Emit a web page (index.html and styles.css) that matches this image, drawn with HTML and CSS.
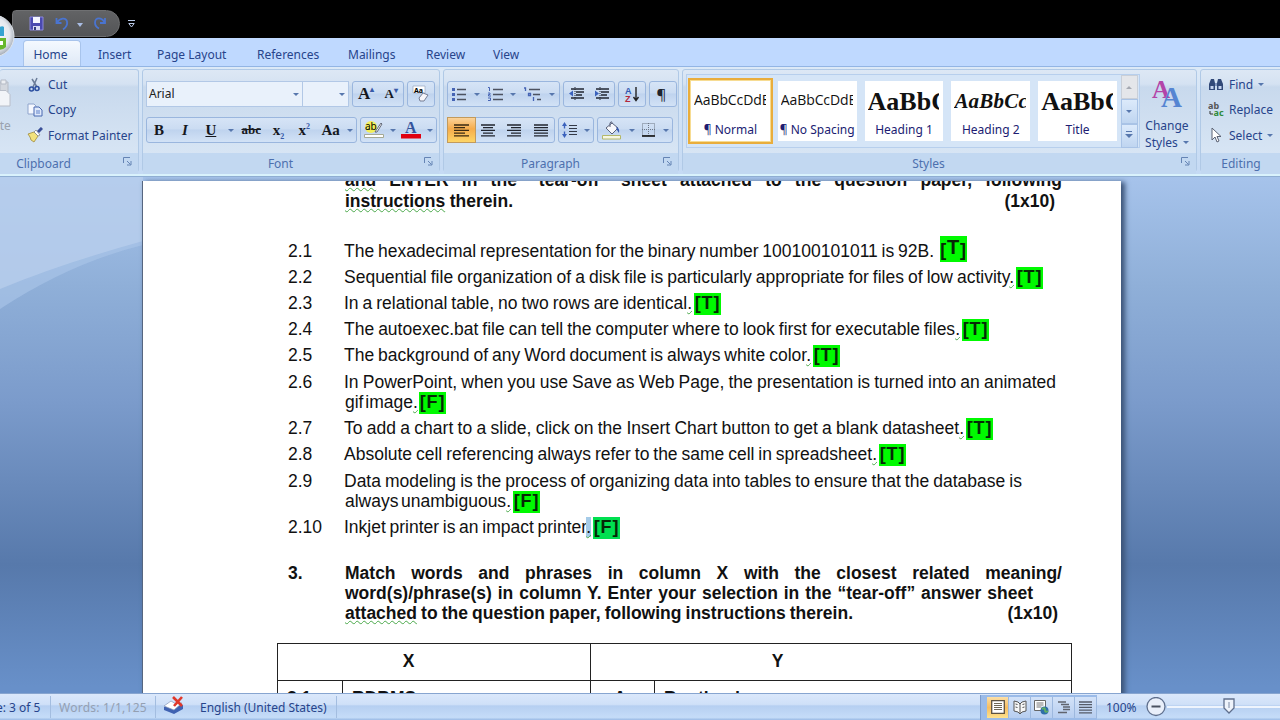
FILE: index.html
```
<!DOCTYPE html>
<html lang="en">
<head>
    <meta charset="UTF-8">
    <title>Word</title>
    <link rel="stylesheet" href="styles.css">
</head>
<body>
    <div class="titlebar">
        <div class="quick">
            <svg width="15" height="15" viewBox="0 0 15 15"><path d="M1 1h13v13H1z" fill="#4a49b0" stroke="#8a88dc"/><path d="M4 1h7v6H4z" fill="#f4f5ff"/><path d="M4 10h7v4H4z" fill="#d8daf4"/><path d="M5 11h2v3H5z" fill="#333a7a"/></svg>
            <svg class="undo" width="14" height="14" viewBox="0 0 14 14"><path d="M1.500 1v5h5M2 5.500C5 1 11 0 12 4.500c.6 3-1 6-4 8" fill="none" stroke="#4a74d0" stroke-width="1.800"/></svg>
            <svg class="undo-arrow" width="6" height="4" viewBox="0 0 6 4"><path d="M0 0h6L3 4z" fill="#a9bde4"/></svg>
            <svg class="redo" width="14" height="14" viewBox="0 0 14 14"><path d="M12 1v5H7M11.500 5.500C9 0 2 0 2 5.500c0 3 2 5 4 6" fill="none" stroke="#4a74d0" stroke-width="1.800"/></svg>
        </div>
        <svg class="more" width="7" height="8" viewBox="0 0 7 8"><path d="M0 .5h7" stroke="#b9c9e8"/><path d="M.8 3.500h5.400L3.500 7z" fill="none" stroke="#b9c9e8"/></svg>
        <svg class="orb" width="15" height="46" viewBox="0 0 15 46"><defs><radialGradient id="orb" cx="-7" cy="20" r="22" gradientUnits="userSpaceOnUse"><stop offset="0" stop-color="#fff"/><stop offset=".75" stop-color="#e4e8ee"/><stop offset="1" stop-color="#a9b1bd"/></radialGradient></defs><circle cx="-7" cy="22" r="21" fill="url(#orb)" stroke="#dfe4ea"/><path d="M-2 14q4-3 6-1v9h-6z" fill="#36a3d0"/><path d="M-3 24h9v9q-4 4-9 2z" fill="#67b82c"/><path d="M0 27h3v4H0z" fill="#fff"/></svg>
    </div>

    <div class="tabs">
        <span class="tab active">Home</span>
        <span class="tab insert">Insert</span>
        <span class="tab layout">Page Layout</span>
        <span class="tab refs">References</span>
        <span class="tab mail">Mailings</span>
        <span class="tab review">Review</span>
        <span class="tab">View</span>
    </div>

    <div class="ribbon">
        <div class="group clipboard">
            <div class="group-body">
                <div class="paste">
                    <svg width="12" height="30" viewBox="0 0 12 30"><path d="M0 3h8v10H0z" fill="#d3d7de" stroke="#b5bbc6"/><path d="M1 1h5v4H1z" fill="#eceef2" stroke="#b5bbc6"/><path d="M-2 11.500h8l4 4V27H-2z" fill="#f2f4f8" stroke="#b9bec9"/></svg>
                    <span>ste</span>
                </div>
                <div class="commands">
                    <span><svg width="16" height="16" viewBox="0 0 16 16"><path d="M5 2l5 8M10 1L6 10" stroke="#6b7c98" stroke-width="1.500"/><circle cx="4.500" cy="12" r="2" fill="none" stroke="#2c4fa0" stroke-width="1.600"/><circle cx="10" cy="11.500" r="2" fill="none" stroke="#2c4fa0" stroke-width="1.600"/></svg>Cut</span>
                    <span><svg width="16" height="16" viewBox="0 0 16 16"><path d="M1 2h6l2 2v8H1z" fill="#f5f8ff" stroke="#8fa4cc"/><path d="M7 5h5l3 3v6H7z" fill="#dfe9fb" stroke="#4968b0"/><path d="M9 9h4M9 11h4" stroke="#5e80c8"/></svg>Copy</span>
                    <span><svg width="16" height="16" viewBox="0 0 16 16"><path d="M1 7l6-2 4 4-4 6-3-2-1-3z" fill="#f2e27c" stroke="#a08a3c" stroke-width=".8"/><path d="M7 5l4 4 2-1-4-5z" fill="#fff" stroke="#777" stroke-width=".7"/><path d="M11 5l4-4" stroke="#3a4f98" stroke-width="3"/></svg>Format Painter</span>
                </div>
            </div>
            <div class="group-name"><span>Clipboard</span><svg class="launcher" width="9" height="9" viewBox="0 0 9 9"><path d="M.5 6V.5H7M4 4l3.500 3.500M8 4v4H4" fill="none" stroke="#6584b4"/></svg></div>
        </div>

        <div class="group font">
            <div class="group-body rows">
                <div class="row">
                    <div class="combo face">Arial<i class="caret"></i></div>
                    <div class="combo size"><i class="caret"></i></div>
                    <div class="buttons sizes"><b class="serif grow">A<sup>▴</sup></b><b class="serif shrink">A<sup>▾</sup></b></div>
                    <div class="buttons clear"><svg width="18" height="18" viewBox="0 0 18 18"><path d="M1 1h12v7H1z" fill="#fff" stroke="#9aa8c0" stroke-width=".7"/><text x="2" y="7.500" class="tiny">Aa</text><path d="M7 13l4-5 5 2-4 6H8z" fill="#f6f6fa" stroke="#777f96"/></svg></div>
                </div>
                <div class="row">
                    <div class="buttons styles-set">
                        <b class="serif w1">B</b><b class="serif w1"><i>I</i></b><b class="serif w1"><u>U</u></b><i class="caret"></i><b class="serif strike">abc</b><b class="serif w2">x<sub>2</sub></b><b class="serif w2">x<sup>2</sup></b><b class="serif w3">Aa</b><i class="caret"></i>
                    </div>
                    <div class="buttons colors">
                        <svg width="20" height="20" viewBox="0 0 20 20"><circle cx="7" cy="7" r="6" fill="#f3ef5a"/><text x="1" y="10" class="ab">ab</text><path d="M11 12l6-9 1 1-5 8z" fill="#fff" stroke="#555a6a" stroke-width=".9"/><path d="M.5 14.500h19v3H.5z" fill="#fff" stroke="#a5a995"/></svg><i class="caret"></i>
                        <svg width="20" height="20" viewBox="0 0 20 20"><text x="4" y="12.500" class="big-a">A</text><path d="M0 14h20v4.500H0z" fill="#e0000f"/></svg><i class="caret"></i>
                    </div>
                </div>
            </div>
            <div class="group-name"><span>Font</span><svg class="launcher" width="9" height="9" viewBox="0 0 9 9"><path d="M.5 6V.5H7M4 4l3.500 3.500M8 4v4H4" fill="none" stroke="#6584b4"/></svg></div>
        </div>

        <div class="group paragraph">
            <div class="group-body rows">
                <div class="row">
                    <div class="buttons lists">
                        <svg width="14" height="14" viewBox="0 0 14 14"><path d="M5 2.500h9M5 7.500h9M5 12.500h9" stroke="#4c5260" stroke-width="1.300"/><path d="M0 1h3v3H0zM0 6h3v3H0zM0 11h3v3H0z" fill="#4664b4"/></svg><i class="caret"></i>
                        <svg width="15" height="14" viewBox="0 0 15 14"><path d="M5 2.500h10M5 7.500h10M5 12.500h10" stroke="#4c5260" stroke-width="1.300"/><path d="M0 .5h1.500V4M0 6h2v1.500H.5V9H3M0 11h2.500v2.500H0" stroke="#4664b4" fill="none"/></svg><i class="caret"></i>
                        <svg width="17" height="15" viewBox="0 0 17 15"><path d="M5 2.500h11M9 7.500h7M13 12.500h4" stroke="#4c5260" stroke-width="1.300"/><path d="M0 1h1.500v3M4.500 6.500h2v2h-2zM9.500 10v4" stroke="#4664b4" fill="none" stroke-width="1.300"/></svg><i class="caret"></i>
                    </div>
                    <div class="buttons indents">
                        <svg width="16" height="14" viewBox="0 0 16 14"><path d="M2 2h13M7 5h8M7 8h6M2 11h13" stroke="#222733" stroke-width="1.700"/><path d="M6 0v14" stroke="#222733" stroke-dasharray="1 1"/><path d="M0 6.500l4-3v6z" fill="#3b62bd"/></svg>
                        <svg width="16" height="14" viewBox="0 0 16 14"><path d="M2 2h13M7 5h8M7 8h6M2 11h13" stroke="#222733" stroke-width="1.700"/><path d="M6 0v14" stroke="#222733" stroke-dasharray="1 1"/><path d="M5 6.500l-4-3v6z" fill="#3b62bd"/></svg>
                    </div>
                    <div class="buttons single"><svg width="16" height="18" viewBox="0 0 16 18"><text x="1" y="8.500" class="sort-a">A</text><text x="1" y="17" class="sort-z">Z</text><path d="M12 2v13M9.500 12l2.500 3.500 2.500-3.500" fill="none" stroke="#222" stroke-width="1.400"/></svg></div>
                    <div class="buttons single pilcrow">¶</div>
                </div>
                <div class="row">
                    <div class="buttons align">
                        <span class="on"><svg width="15" height="13" viewBox="0 0 15 13"><path d="M0 1h15M0 3.700h11M0 6.400h15M0 9.100h11M0 11.800h15" stroke="#3a2a12" stroke-width="1.300"/></svg></span>
                        <span><svg width="14" height="13" viewBox="0 0 14 13"><path d="M0 1h14M2 3.700h10M0 6.400h14M2 9.100h10M0 11.800h14" stroke="#20242e" stroke-width="1.300"/></svg></span>
                        <span><svg width="14" height="13" viewBox="0 0 14 13"><path d="M0 1h14M4 3.700h10M0 6.400h14M4 9.100h10M0 11.800h14" stroke="#20242e" stroke-width="1.300"/></svg></span>
                        <span><svg width="14" height="13" viewBox="0 0 14 13"><path d="M0 1h14M0 3.700h14M0 6.400h14M0 9.100h14M0 11.800h14" stroke="#20242e" stroke-width="1.300"/></svg></span>
                    </div>
                    <div class="buttons spacing"><svg width="15" height="16" viewBox="0 0 15 16"><path d="M7 3.500h8M7 6.500h8M7 9.500h8M7 12.500h8" stroke="#333947"/><path d="M2.500 0L5 4H3.200v2.500H1.800V4H0zM2.500 16L5 12H3.200V9.500H1.800V12H0z" fill="#3b62bd"/></svg><i class="caret"></i></div>
                    <div class="buttons shading">
                        <svg width="20" height="19" viewBox="0 0 20 19"><path d="M4 7l6-5 6 5-6 6z" fill="#f7f8fc" stroke="#59617a"/><path d="M8 6V2q2-3 2 1" fill="none" stroke="#59617a"/><path d="M14 6q4 1 3 6l-2-3z" fill="#3558b0"/><path d="M.5 14.500h18v3.500H.5z" fill="#f5f6e4" stroke="#b4b86a"/></svg><i class="caret"></i>
                        <svg width="14" height="14" viewBox="0 0 14 14"><path d="M.5 .5h12v12H.5zM6.500 0v13M0 6.500h13" fill="none" stroke="#6d7685" stroke-dasharray="1 1"/><path d="M0 13h13" stroke="#111" stroke-width="1.600"/></svg><i class="caret"></i>
                    </div>
                </div>
            </div>
            <div class="group-name"><span>Paragraph</span><svg class="launcher" width="9" height="9" viewBox="0 0 9 9"><path d="M.5 6V.5H7M4 4l3.500 3.500M8 4v4H4" fill="none" stroke="#6584b4"/></svg></div>
        </div>

        <div class="group styles">
            <div class="group-body gallery-row">
                <div class="gallery">
                    <div class="style selected"><div class="sample">AaBbCcDdEe</div><div class="name">¶ Normal</div></div>
                    <div class="style"><div class="sample">AaBbCcDdEe</div><div class="name">¶ No Spacing</div></div>
                    <div class="style"><div class="sample heading">AaBbCc</div><div class="name">Heading 1</div></div>
                    <div class="style"><div class="sample heading2">AaBbCcD</div><div class="name">Heading 2</div></div>
                    <div class="style"><div class="sample heading">AaBbCc</div><div class="name">Title</div></div>
                    <div class="scroller"><span class="off"><i class="caret up"></i></span><span><i class="caret"></i></span><span class="last"><i class="caret"></i></span></div>
                </div>
                <div class="change">
                    <svg width="32" height="30" viewBox="0 0 32 30"><text x="1" y="18" class="change-1">A</text><text x="10" y="27" class="change-2">A</text></svg>
                    <span>Change</span>
                    <span>Styles <i class="caret"></i></span>
                </div>
            </div>
            <div class="group-name"><span>Styles</span><svg class="launcher" width="9" height="9" viewBox="0 0 9 9"><path d="M.5 6V.5H7M4 4l3.500 3.500M8 4v4H4" fill="none" stroke="#6584b4"/></svg></div>
        </div>

        <div class="group editing">
            <div class="group-body commands">
                <span><svg width="16" height="14" viewBox="0 0 16 14"><path d="M3 1h3l1 4v7H1V6zM10 1h3l2 5v6H9V5z" fill="#324978"/><path d="M7 5h2v3H7z" fill="#7f93bd"/><path d="M2.500 8h3v3h-3zM10.500 8h3v3h-3z" fill="#c5d4ef"/></svg>Find<i class="caret"></i></span>
                <span><svg width="16" height="16" viewBox="0 0 16 16"><text x="0" y="7" class="rep-a">ab</text><text x="5.500" y="14" class="rep-b">ac</text><path d="M2 9v3h3" fill="none" stroke="#333"/></svg>Replace</span>
                <span><svg width="16" height="16" viewBox="0 0 16 16"><path d="M4 1v12l3-3 2 5 2-1-2-4.500h4z" fill="#fff" stroke="#5b6274"/></svg>Select<i class="caret"></i></span>
            </div>
            <div class="group-name"><span>Editing</span></div>
        </div>
    </div>

    <div class="workspace">
        <svg class="swoosh" width="143" height="517" viewBox="0 0 143 517"><path d="M0 0h143v68Q70 86 0 132z" fill="#abc7e9" opacity=".6"/><path d="M0 0h143v64Q60 87 0 112z" fill="#bed2ef" opacity=".6"/></svg>
        <div class="page">
            <div class="intro">
                <p class="line full"><u>and</u> ENTER in the “tear-off” sheet attached to the question paper, following</p>
                <div class="line ends"><p class="w168"><u>instructions</u> therein.</p><span class="marks first">(1x10)</span></div>
            </div>
            <div class="item"><span class="num">2.1</span><div><div class="line"><p class="w590">The hexadecimal representation for the binary number 100100101011 is 92B.</p><mark class="tall">[<b>T</b>]</mark></div></div></div>
            <div class="item"><span class="num">2.2</span><div><div class="line"><p class="w670">Sequential file organization of a disk file is particularly appropriate for files of low activity<u>.</u></p><mark>[T]</mark></div></div></div>
            <div class="item"><span class="num">2.3</span><div><div class="line"><p class="w348">In a relational table, no two rows are identical<u>.</u></p><mark>[T]</mark></div></div></div>
            <div class="item"><span class="num">2.4</span><div><div class="line"><p class="w616">The autoexec.bat file can tell the computer where to look first for executable files<u>.</u></p><mark>[T]</mark></div></div></div>
            <div class="item"><span class="num">2.5</span><div><div class="line"><p class="w467">The background of any Word document is always white color<u>.</u></p><mark>[T]</mark></div></div></div>
            <div class="item"><span class="num">2.6</span><div><div class="line"><p class="w712">In PowerPoint, when you use Save as Web Page, the presentation is turned into an animated</p></div><div class="line second"><p class="w72">gif image<u>.</u></p><mark>[F]</mark></div></div></div>
            <div class="item"><span class="num">2.7</span><div><div class="line"><p class="w620">To add a chart to a slide, click on the Insert Chart button to get a blank datasheet<u>.</u></p><mark>[T]</mark></div></div></div>
            <div class="item"><span class="num">2.8</span><div><div class="line"><p class="w533">Absolute cell referencing always refer to the same cell in spreadsheet<u>.</u></p><mark>[T]</mark></div></div></div>
            <div class="item"><span class="num">2.9</span><div><div class="line"><p class="w678">Data modeling is the process of organizing data into tables to ensure that the database is</p></div><div class="line second"><p class="w166">always unambiguous<u>.</u></p><mark>[F]</mark></div></div></div>
            <div class="item"><span class="num">2.10</span><div><div class="line"><p class="w247">Inkjet printer is an impact printer<u class="picked">.</u></p><mark class="picked">[F]</mark></div></div></div>

            <div class="question">
                <span class="num">3.</span>
                <div class="question-text">
                    <p class="line full">Match words and phrases in column X with the closest related meaning/</p>
                    <p class="line w688">word(s)/phrase(s) in column Y. Enter your selection in the “tear-off” answer sheet</p>
                    <div class="line ends"><p class="w508"><u>attached</u> to the question paper, following instructions therein.</p><span class="marks">(1x10)</span></div>
                </div>
            </div>

            <table>
                <colgroup><col class="c1"><col class="c2"><col class="c3"><col class="c4"></colgroup>
                <tr><th class="x" colspan="2">X</th><th class="y" colspan="2">Y</th></tr>
                <tr><td>3.1</td><td>RDBMS</td><td class="letter">A.</td><td>Bootload</td></tr>
            </table>
        </div>
    </div>

    <div class="status">
        <span class="cell pages">e: 3 of 5</span>
        <span class="cell words">Words: 1/1,125</span>
        <span class="cell proof"><svg width="22" height="20" viewBox="0 0 22 20"><path d="M1 11l8-4 4 3 7-1v4l-9 5-10-4z" fill="#3f62b2"/><path d="M1 10l7-5 5 3 6-1-8 7z" fill="#fff" stroke="#8795b5" stroke-width=".7"/><path d="M10 1l9 9M19 1l-8 9" stroke="#e0382a" stroke-width="2.600"/></svg></span>
        <span class="cell lang">English (United States)</span>
        <div class="views">
            <span class="on"><svg width="14" height="14" viewBox="0 0 14 14"><path d="M.7 .7h12.600v12.600H.7z" fill="#fff" stroke="#5c5140" stroke-width="1.300"/><path d="M3 3.500h8M3 5.500h8M3 7.500h8M3 9.500h8" stroke="#6d6656"/></svg></span>
            <span><svg width="14" height="14" viewBox="0 0 14 14"><path d="M1 1l4 1 2 2 2-2 4-1v10l-4 1-2 2-2-2-4-1z" fill="#f7f7f7" stroke="#555"/><path d="M7 4v9M2.500 4l2 .5M2.500 7l2 .5M9.500 4.500l2-.5M9.500 7.500l2-.5" stroke="#555"/></svg></span>
            <span><svg width="15" height="15" viewBox="0 0 15 15"><path d="M.5 .5h11v10H.5z" fill="#fff" stroke="#666"/><path d="M2.500 3h7M2.500 5h7M2.500 7h5" stroke="#777"/><circle cx="10.500" cy="10.500" r="4" fill="#2f6fa8"/><path d="M8 9q3-2 3 1t3 1" stroke="#5fae63" stroke-width="2" fill="none"/></svg></span>
            <span><svg width="12" height="13" viewBox="0 0 12 13"><path d="M0 1h8M3 3.500h8M5 6h7M5 8.500h7M0 11.500h9" stroke="#60646e" stroke-width="1.300"/></svg></span>
            <span><svg width="13" height="13" viewBox="0 0 13 13"><path d="M0 1h13M0 3.700h13M0 6.400h13M0 9.100h13M0 11.800h13" stroke="#555b68" stroke-width="1.300"/></svg></span>
        </div>
        <span class="zoom">100%</span>
        <svg width="20" height="20" viewBox="0 0 20 20"><circle cx="10" cy="9.500" r="9" fill="#e9effa" stroke="#5f6f8d" stroke-width="1.300"/><path d="M5.500 9.500h9" stroke="#4a5262" stroke-width="2"/></svg>
        <div class="track"><svg class="thumb" width="12" height="16" viewBox="0 0 12 16"><path d="M1 1h10v9l-5 5-5-5z" fill="#eef3fb" stroke="#5f6f8d" stroke-width="1.300"/><path d="M6 4v6" stroke="#7c8aa5"/></svg></div>
    </div>
</body>
</html>
```
FILE: styles.css
```
* {
    box-sizing: border-box;
}
body {
    margin: 0;
    width: 1280px;
    height: 720px;
    overflow: hidden;
    display: flex;
    flex-direction: column;
    font-family: "Noto Sans", sans-serif;
    font-size: 12px;
    color: #27448b;
    background: #000;
}
p {
    margin: 0;
}
svg {
    flex: none;
    display: block;
}
.titlebar {
    position: relative;
    height: 38px;
    flex: none;
    display: flex;
    align-items: flex-start;
    padding: 10px 0 0 12px;
}
.quick {
    width: 108px;
    height: 27px;
    display: flex;
    align-items: center;
    padding-left: 16px;
    background: linear-gradient(#626365, #535456);
    border: 1px solid #6f7072;
    border-radius: 4px 14px 14px 0;
}
.undo {
    margin-left: 11px;
}
.undo-arrow {
    margin: 2px 0 0 8px;
}
.redo {
    margin-left: 10px;
}
.more {
    margin: 10px 0 0 8px;
}
.orb {
    position: absolute;
    left: 0;
    top: 14px;
    z-index: 2;
}
.tabs {
    height: 28px;
    flex: none;
    display: flex;
    padding: 2px 0 0 23px;
    background: #bfd9ff;
}
.tab {
    line-height: 30px;
    margin-right: 27px;
    white-space: nowrap;
}
.tab.active {
    width: 58px;
    line-height: 28px;
    text-align: center;
    background: linear-gradient(#f4f9ff, #dfe9f6);
    border: 1px solid #a8c4ec;
    border-bottom: 0;
    border-radius: 4px 4px 0 0;
    margin-right: 17px;
    padding-right: 3px;
}
.insert {
    width: 32px;
}
.layout {
    width: 72px;
    margin-right: 28px;
}
.refs {
    width: 64px;
}
.mail {
    width: 49px;
    margin-right: 29px;
}
.review {
    width: 40px;
}
.ribbon {
    height: 110px;
    flex: none;
    display: flex;
    gap: 3px;
    padding: 2px 0 2px;
    background: linear-gradient(#dce9f7, #c5daf4);
    border-top: 1px solid #93b5e4;
    border-bottom: 2px solid #d9f2fc;
}
.group {
    flex: none;
    display: flex;
    flex-direction: column;
    border: 1px solid #b0c9e6;
    border-radius: 3px;
    background: linear-gradient(#dde8f5 0, #d5e2f2 14px, #c8d9ed 17px, #dbe8f6 100%);
}
.clipboard {
    width: 139px;
    border-left: 0;
}
.font {
    width: 298px;
}
.paragraph {
    width: 236px;
}
.styles {
    width: 515px;
}
.editing {
    width: 90px;
}
.group-body {
    height: 83px;
    flex: none;
}
.group-name {
    position: relative;
    flex: 1;
    background: #c2d8f1;
    color: #4d70ae;
    text-align: center;
    line-height: 21px;
}
.clipboard .group-name {
    padding-right: 51px;
}
.font .group-name {
    padding-right: 21px;
}
.paragraph .group-name {
    padding-right: 21px;
}
.styles .group-name {
    padding-right: 22px;
}
.editing .group-name {
    padding-right: 8px;
}
.launcher {
    position: absolute;
    right: 6px;
    top: 4px;
}
.clipboard .group-body {
    display: flex;
}
.paste {
    width: 27px;
    overflow: hidden;
    padding-top: 9px;
    color: #9aa2ae;
}
.paste span {
    display: block;
    margin: 10px 0 0 -6px;
    line-height: 14px;
}
.commands {
    display: flex;
    flex-direction: column;
    padding-top: 2px;
}
.commands > span {
    display: flex;
    align-items: center;
    gap: 5px;
    height: 25.300px;
    white-space: nowrap;
}
.caret {
    flex: none;
    display: inline-block;
    border: 3px solid transparent;
    border-top-color: #5777ad;
    border-bottom-width: 0;
}
.caret.up {
    border-top-width: 0;
    border-bottom: 3px solid #a5a9b2;
}
.rows {
    padding: 11px 0 0 3px;
}
.row {
    display: flex;
    gap: 3px;
    height: 26px;
    margin-bottom: 10px;
}
.combo {
    display: flex;
    justify-content: space-between;
    align-items: center;
    height: 26px;
    background: #e9f1fb;
    border: 1px solid #b2c8e6;
    color: #222;
    padding: 0 3px 1px 2px;
}
.combo .caret {
    margin-top: 2px;
}
.face {
    width: 157px;
}
.size {
    width: 47px;
    margin-left: -4px;
    justify-content: flex-end;
}
.buttons {
    display: flex;
    align-items: center;
    justify-content: space-around;
    height: 26px;
    border: 1px solid #9ab6de;
    border-radius: 3px;
    background: linear-gradient(#d6e4f6 0, #cbdcf2 45%, #bfd3ee 50%, #d2e2f6 100%);
}
.sizes {
    width: 52px;
}
.clear {
    width: 28px;
}
.serif {
    font-family: "Liberation Serif", serif;
    font-size: 15px;
    line-height: 20px;
    color: #16181e;
    text-align: center;
}
.serif sup, .serif sub {
    font-size: 8px;
    line-height: 0;
    color: #3759a8;
}
.grow {
    font-size: 17px;
}
.shrink {
    font-size: 13px;
}
.styles-set {
    width: 211px;
    justify-content: flex-start;
}
.w1 {
    width: 27px;
    padding-right: 2px;
}
.w2 {
    width: 27px;
}
.w3 {
    width: 28px;
}
.styles-set .caret {
    margin: 0 3px;
}
.strike {
    width: 30px;
    font-size: 13px;
    text-decoration: line-through;
}
.colors {
    width: 77px;
}
.tiny {
    font: bold 7px "Noto Sans", sans-serif;
}
.ab {
    font: 10px "Noto Sans", sans-serif;
}
.big-a {
    font: bold 16px "Liberation Serif", serif;
    fill: #34549c;
}
.lists {
    width: 113px;
}
.indents {
    width: 52px;
}
.single {
    width: 28px;
}
.sort-a, .sort-z {
    font: bold 9px "Liberation Sans", sans-serif;
    fill: #2f57b0;
}
.sort-z {
    fill: #b2283e;
}
.pilcrow {
    font-size: 15px;
    color: #20242e;
    padding-right: 3px;
}
.align {
    width: 108px;
}
.align span {
    flex: 1;
    height: 24px;
    display: flex;
    align-items: center;
    justify-content: center;
}
.align .on {
    background: linear-gradient(#fbd39a, #f6ac4c 45%, #fdd566);
    box-shadow: 0 0 0 1px #c29a5c;
}
.spacing {
    width: 36px;
}
.shading {
    width: 76px;
}
.gallery-row {
    display: flex;
    padding: 4px 0 0 3px;
}
.gallery {
    width: 454px;
    height: 74px;
    display: flex;
    gap: 8px;
    padding: 6px 0 6px 4px;
    border: 1px solid #b7cfed;
    background: #d5e5f7;
}
.style {
    width: 78.800px;
    flex: none;
    background: #fff;
    text-align: center;
    color: #201c72;
    padding: 0 4px;
}
.selected {
    box-shadow: 0 0 0 1px #f7dc92, 0 0 0 3px #e9ad3c;
}
.sample {
    height: 40px;
    line-height: 38px;
    overflow: hidden;
    white-space: nowrap;
    text-align: left;
    font-family: "Open Sans", sans-serif;
    font-size: 14px;
    letter-spacing: -0.100px;
    margin-left: -1px;
    color: #111;
}
.heading {
    font: bold 26px/42px "Liberation Serif", serif;
    letter-spacing: 0;
}
.heading2 {
    font: italic bold 21px/40px "Liberation Serif", serif;
    letter-spacing: 0.200px;
}
.name {
    white-space: nowrap;
    line-height: 18px;
    margin: 0 -4px;
}
.scroller {
    width: 17px;
    margin: -6px 0 -7px -4px;
    display: flex;
    flex-direction: column;
}
.scroller span {
    flex: 1;
    display: flex;
    align-items: center;
    justify-content: center;
    border: 1px solid #a9c3e6;
    background: linear-gradient(#dceafb, #bfd5f0);
}
.scroller .off {
    background: #e4e6ea;
    border-color: #c9cfd8;
}
.scroller .last .caret {
    border-width: 4px 4px 0;
    box-shadow: 0 -3px 0 -1px #d2e2f6, 0 -4px 0 -1px #5777ad;
}
.change {
    flex: 1;
    display: flex;
    flex-direction: column;
    align-items: center;
    line-height: 17px;
    padding: 6px 2px 0 0;
}
.change svg {
    margin-bottom: 7px;
}
.change .caret {
    margin: 0 0 3px 2px;
}
.change-1, .change-2 {
    font: bold 25px "Liberation Serif", serif;
    fill: #b344a8;
}
.change-2 {
    font-size: 29px;
    fill: #5685d2;
}
.editing .group-body {
    padding-left: 7px;
}
.rep-a, .rep-b {
    font: bold 9px "Noto Sans", sans-serif;
    fill: #555;
}
.rep-b {
    fill: #2e8b3c;
}

.workspace {
    position: relative;
    height: 517px;
    flex: none;
    overflow: hidden;
    padding: 4px 0 0 143px;
    background: linear-gradient(#a6c3eb 0, #8fafd8 110px, #7b9bcb 225px, #5779ab 388px, #6890c9 510px);
    border-top: 1px solid #8faed2;
}
.swoosh {
    position: absolute;
    left: 0;
    top: 0;
}
.page {
    position: relative;
    width: 978px;
    height: 514px;
    overflow: hidden;
    background: #fff;
    box-shadow: -1px 0 #566680, 3px 2px 5px 1px #3c5478;
    padding: 0 0 0 145px;
    font-family: "Liberation Sans", Arial, sans-serif;
    font-size: 17.500px;
    color: #111;
}
.page u {
    text-decoration: underline wavy #4aa84a 1px;
    text-underline-offset: 1px;
}
.line {
    display: flex;
    height: 20.600px;
    line-height: 20.600px;
    white-space: nowrap;
}
.line p, p.line {
    display: block;
    flex: none;
    white-space: nowrap;
    text-align: justify;
    text-align-last: justify;
    word-spacing: -3px;
}
.intro {
    margin: -10.600px 0 26.200px;
    padding-left: 57px;
    font-weight: bold;
}
.full {
    width: 717px;
}
.ends {
    justify-content: space-between;
    width: 713px;
}
.ends .first {
    margin-right: 3px;
}
.item {
    display: flex;
    padding: 2.800px 0;
}
.num {
    width: 56px;
    flex: none;
    line-height: 20.600px;
}
.second {
    padding-left: 1px;
}
mark {
    height: 22px;
    margin: 0 0 0 2px;
    width: 27px;
    text-align: center;
    background: #00fa00;
    color: #062806;
    font-weight: bold;
    font-size: 18px;
    line-height: 21px;
    letter-spacing: 0.800px;
}
.tall {
    height: 26px;
    margin: -5px 0 0 6px;
    line-height: 27px;
}
.tall b {
    font-size: 20px;
    position: relative;
    top: -2px;
}
mark.picked {
    background: #00e050;
}
u.picked {
    background: #a5cbe8;
}
.question {
    display: flex;
    margin-top: 22px;
    font-weight: bold;
}
.question .num {
    width: 57px;
}
.question .line, .question .num {
    height: 19.900px;
    line-height: 20px;
}
.w168 { width: 168px; }
.w590 { width: 590px; }
.w670 { width: 670px; }
.w348 { width: 348px; }
.w616 { width: 616px; }
.w467 { width: 467px; }
.w712 { width: 712px; }
.w72 { width: 72px; }
.w620 { width: 620px; }
.w533 { width: 533px; }
.w678 { width: 678px; }
.w166 { width: 166px; }
.w247 { width: 247px; }
.w688 { width: 688px; }
.w508 { width: 508px; }
table {
    width: 795px;
    margin: 20.600px 0 0 -11px;
    table-layout: fixed;
    border-collapse: collapse;
    font-weight: bold;
}
.c1 { width: 65px; }
.c2 { width: 248px; }
.c3 { width: 64px; }
th, td {
    border: 1px solid #222;
    height: 37px;
    padding: 0 9px 2px;
    text-align: left;
    line-height: 32px;
}
.x {
    text-align: center;
    padding-right: 60px;
}
.y {
    text-align: center;
    padding-right: 116px;
}
.letter {
    text-align: center;
}

.status {
    height: 27px;
    flex: none;
    display: flex;
    align-items: center;
    white-space: nowrap;
    border-top: 1px solid #87a5d0;
    background: linear-gradient(#dbe8fb 0, #cfe0f8 40%, #b6cff1 46%, #c5dcf8 90%, #9ab9e4);
}
.cell {
    height: 22px;
    line-height: 23px;
    border-right: 1px solid #a3bde0;
}
.pages {
    width: 51px;
    overflow: hidden;
    text-indent: -4px;
}
.words {
    width: 105px;
    padding-left: 8px;
    color: #94a0b2;
    letter-spacing: 0.250px;
}
.proof {
    width: 33px;
    padding-left: 7px;
    border: 0;
}
.lang {
    width: 148px;
    padding-left: 11px;
}
.views {
    display: flex;
    height: 25px;
    margin-left: 643px;
    padding: 2px 0 2px 6px;
    border-left: 1px solid #7d9ccb;
    background: #9bbbe8;
}
.views span {
    width: 22px;
    display: flex;
    align-items: center;
    justify-content: center;
    background: linear-gradient(#d3e2f8, #b7cef0);
    border-right: 1px solid #9db8de;
}
.views .on {
    background: linear-gradient(#fbdfa8, #f7bd60 50%, #fde28e);
}
.zoom {
    width: 49px;
    padding-left: 9px;
}
.status > svg {
    margin-right: 1px;
}
.zoom, .track {
    align-self: stretch;
    line-height: 27px;
}
.track {
    position: relative;
    flex: 1;
    background: linear-gradient(transparent 12px, #eef4fd 12px, #eef4fd 14px, transparent 14px);
}
.thumb {
    position: absolute;
    left: 56px;
    top: 4px;
}
```
